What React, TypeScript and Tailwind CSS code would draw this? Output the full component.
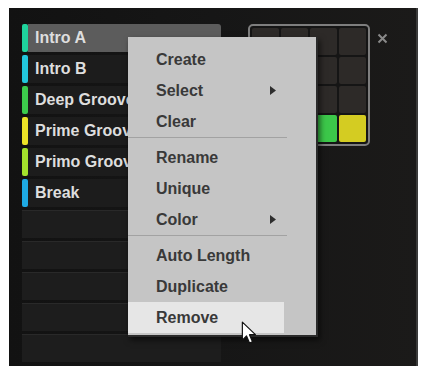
import React from 'react';

const scenes = [
  { name: 'Intro A', color: '#1fd39c', selected: true },
  { name: 'Intro B', color: '#22c6dc' },
  { name: 'Deep Groove', color: '#3ccb4c' },
  { name: 'Prime Groove', color: '#ece327' },
  { name: 'Primo Groove', color: '#a3e22c' },
  { name: 'Break', color: '#1eaae4' },
];

const padRows = [
  ['#2d2a28', '#2d2a28', '#2d2a28', '#2d2a28'],
  ['#2d2a28', '#2d2a28', '#2d2a28', '#2d2a28'],
  ['#2d2a28', '#2d2a28', '#2d2a28', '#2d2a28'],
  ['#1fd39c', '#22c6dc', '#3cc84a', '#d4cc22'],
];

type MenuEntry = { label: string; arrow?: boolean; active?: boolean } | 'sep';

const menu: MenuEntry[] = [
  { label: 'Create' },
  { label: 'Select', arrow: true },
  { label: 'Clear' },
  'sep',
  { label: 'Rename' },
  { label: 'Unique' },
  { label: 'Color', arrow: true },
  'sep',
  { label: 'Auto Length' },
  { label: 'Duplicate' },
  { label: 'Remove', active: true },
];

export default function App() {
  return (
    <div
      className="w-[421px] h-[368px] bg-white pt-[8px] pl-[9px] pr-[3px] pb-[2px]"
      style={{ fontFamily: '"Liberation Sans", Arial, sans-serif' }}
    >
      <div className="relative w-full h-full bg-gradient-to-r from-[#121212] via-[#161616] to-[#1b1a19] border-r-2 border-[#3a3a3a] flex pt-[16px] pl-[13px] overflow-hidden">
        {/* scene list */}
        <div className="w-[199px] flex flex-col gap-[3px]">
          {scenes.map((s) => (
            <div key={s.name} className="h-[28px] flex">
              <div className="w-[6px] h-full rounded-[2px]" style={{ backgroundColor: s.color }} />
              <div
                className={`flex-1 flex items-center pl-[7px] text-[16px] font-bold text-[#dedede] whitespace-nowrap overflow-hidden ${
                  s.selected ? 'bg-[#5c5c5c] rounded-r-[3px]' : 'bg-[#1c1c1c]'
                }`}
              >
                {s.name}
              </div>
            </div>
          ))}
          {[0, 1, 2, 3, 4].map((i) => (
            <div key={i} className="h-[28px] bg-[#1d1d1d] border-t border-[#292929]" />
          ))}
        </div>

        {/* pad grid */}
        <div className="ml-[27px] w-[122px] h-[122px] rounded-[5px] border-2 border-[#7e7e7e] bg-[#151515] p-[2px] grid grid-cols-4 gap-[2px]">
          {padRows.flat().map((c, i) => (
            <div key={i} className="rounded-[2px]" style={{ backgroundColor: c }} />
          ))}
        </div>

        {/* close */}
        <div className="ml-[7px] mt-[9px] w-[11px] h-[11px]">
          <svg viewBox="0 0 11 11" className="w-[11px] h-[11px]">
            <path d="M1.5 1.5 L9.5 9.5 M9.5 1.5 L1.5 9.5" stroke="#8a8a8a" strokeWidth="2" />
          </svg>
        </div>

        {/* context menu */}
        <div className="absolute left-[119px] top-[29px] w-[190px] h-[300px] bg-[#c5c5c5] border-r-2 border-b-2 border-[#2a2a2a] shadow-[2px_3px_6px_rgba(0,0,0,0.6)] pt-[7px]">
          {menu.map((m, i) =>
            m === 'sep' ? (
              <div key={i} className="w-[159px] h-[5px] flex items-start">
                <div className="w-full h-px bg-[#a2a2a2]" />
              </div>
            ) : (
              <div
                key={i}
                className={`relative w-[156px] h-[31px] flex items-center pl-[28px] text-[16px] font-bold text-[#393939] ${
                  m.active ? 'bg-[#e6e6e6]' : ''
                }`}
              >
                {m.label}
                {m.arrow && (
                  <svg viewBox="0 0 6 9" className="absolute left-[142px] top-[11px] w-[6px] h-[9px]">
                    <path d="M0 0 L6 4.5 L0 9 Z" fill="#2e2e2e" />
                  </svg>
                )}
              </div>
            )
          )}
        </div>

        {/* mouse cursor */}
        <svg viewBox="0 0 14 21" className="absolute left-[232px] top-[313px] w-[17px] h-[25px]">
          <path
            d="M1 1 L1 16 L4.5 12.5 L7 18.5 L9.5 17.5 L7 11.5 L12 11.5 Z"
            fill="#ffffff"
            stroke="#111111"
            strokeWidth="1"
            strokeLinejoin="round"
          />
        </svg>
      </div>
    </div>
  );
}
